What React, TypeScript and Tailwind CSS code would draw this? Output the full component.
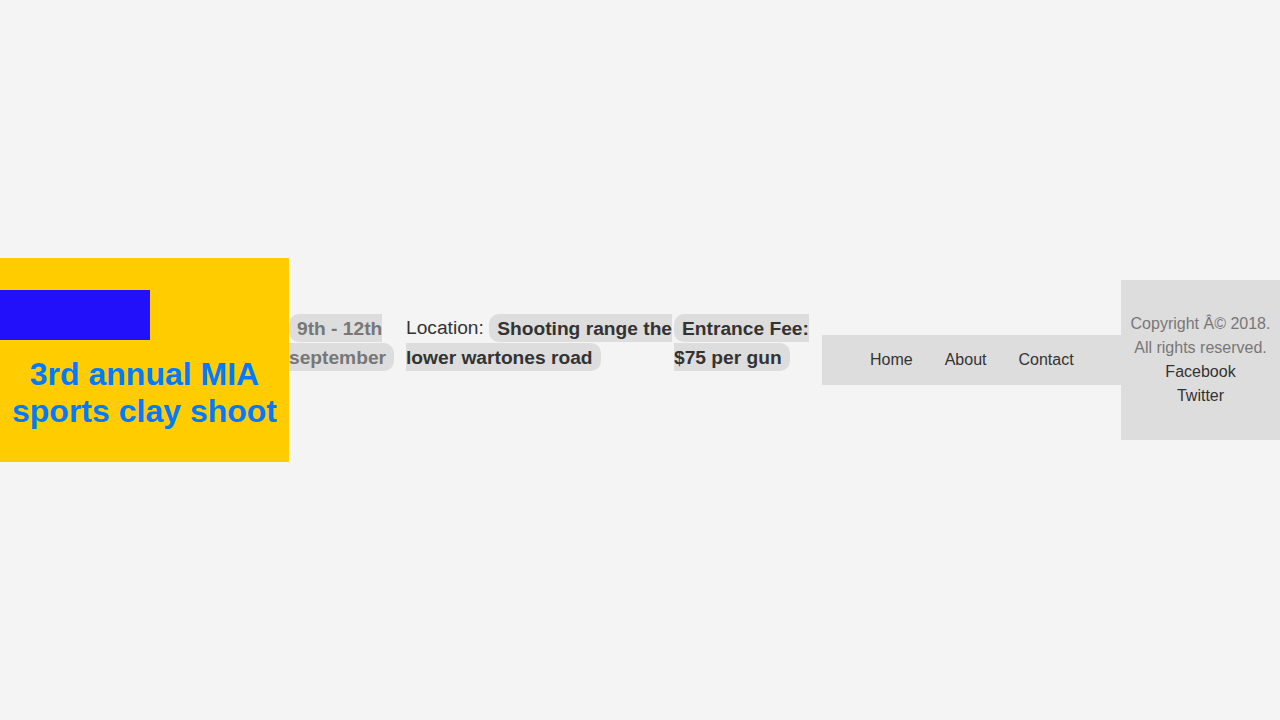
import React from "react";

const pillClass =
  "bg-[#dddddd] rounded-[10px] px-2 py-[3.5px] font-bold";

const App = () => {
  return (
    <div className="flex items-center w-full h-[720px] bg-[#f4f4f4] font-['Liberation_Sans',Arial,sans-serif] text-[#333]">
      <header className="w-[289px] shrink-0 bg-[#ffcc00] py-8 px-[10px]">
        <div className="w-[150px] h-[50px] bg-[#2210fb] -ml-[10px]" />
        <h1 className="mt-4 text-[32px] leading-[1.15] font-bold text-center text-[#007bff]">
          3rd annual MIA sports clay shoot
        </h1>
      </header>

      <div className="w-[117px] shrink-0 mb-[36px] text-[19.2px] leading-[29px]">
        <span className={`${pillClass} text-[#777]`}>9th - 12th september</span>
      </div>

      <div className="w-[268px] shrink-0 mb-[36px] text-[19.2px] leading-[29px]">
        Location:{" "}
        <span className={pillClass}>Shooting range the lower wartones road</span>
      </div>

      <div className="w-[148px] shrink-0 mb-[36px] text-[19.2px] leading-[29px]">
        <span className={pillClass}>Entrance Fee: $75 per gun</span>
      </div>

      <nav className="w-[299px] shrink-0 h-[50px] bg-[#dddddd] px-8 flex items-center">
        <a className="px-4 text-base">Home</a>
        <a className="px-4 text-base">About</a>
        <a className="px-4 text-base">Contact</a>
      </nav>

      <footer className="w-[159px] shrink-0 bg-[#dddddd] py-8 px-[6px] text-center text-base leading-6">
        <p className="text-[#777]">Copyright Â© 2018. All rights reserved.</p>
        <p>Facebook</p>
        <p>Twitter</p>
      </footer>
    </div>
  );
};

export default App;
